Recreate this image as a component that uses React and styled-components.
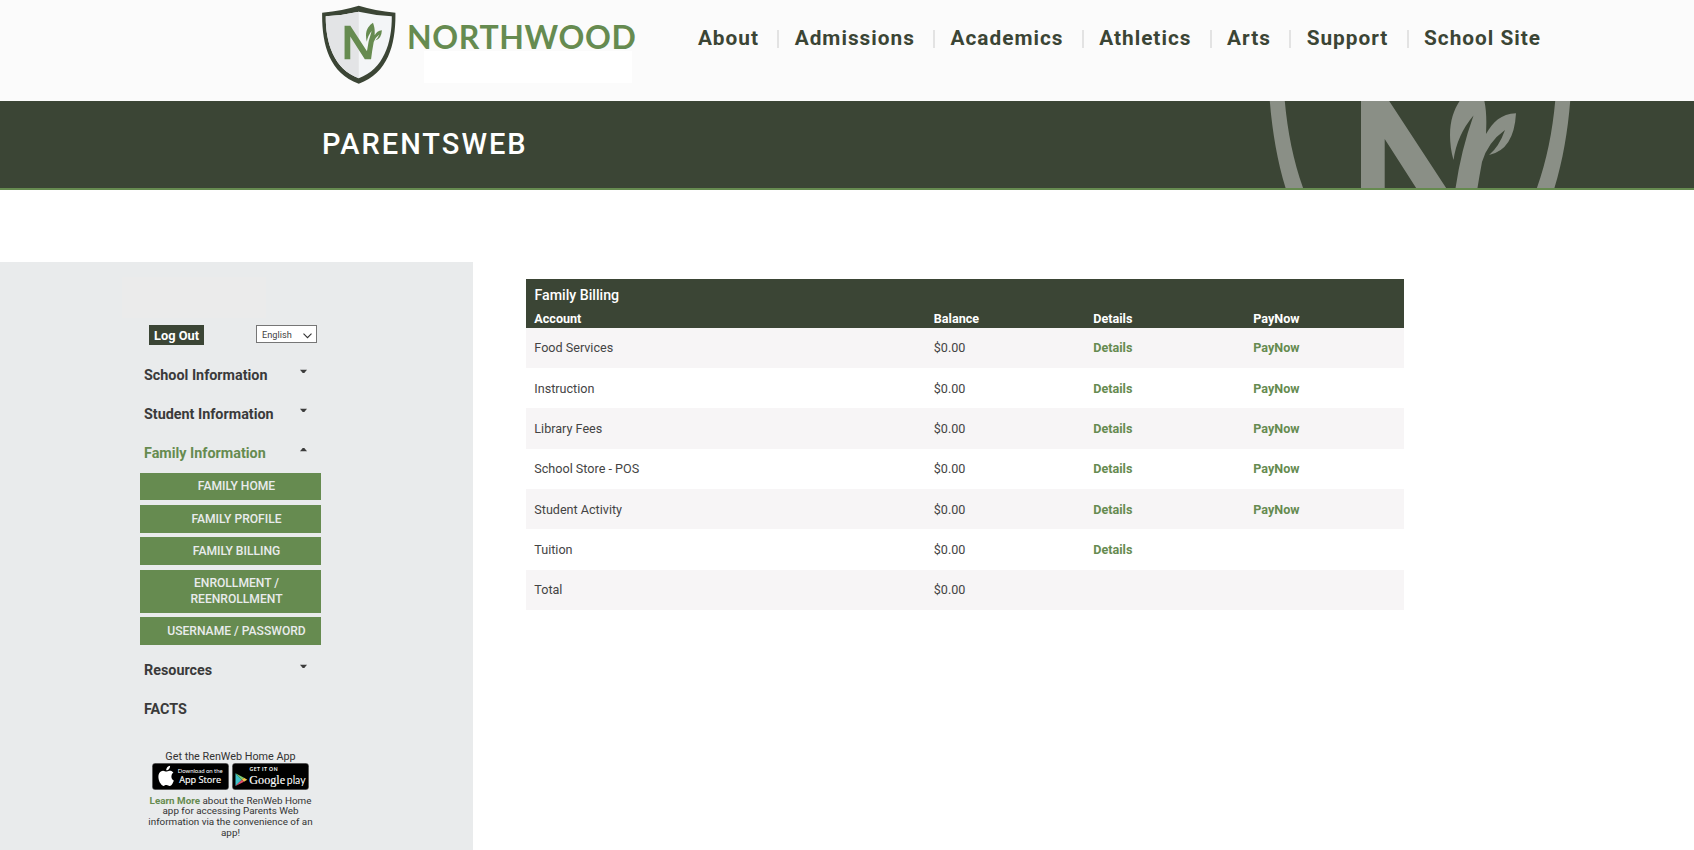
import React from 'react';
import styled, { createGlobalStyle } from 'styled-components';

const DARK = '#3b4535';
const GREEN = '#668b50';

const GlobalStyle = createGlobalStyle`
  * { box-sizing: border-box; }
  body { margin: 0; background: #fff; color: #444; font-family: Roboto, Arial, sans-serif; overflow: hidden; }
  a { color: inherit; text-decoration: none; }
`;

const Page = styled.div`
  width: 1694px;
  height: 850px;
  overflow: hidden;
`;

/* Header */
const Header = styled.header`
  display: flex;
  align-items: flex-start;
  height: 101px;
  padding-left: 322px;
  background: #fbfbfb;
`;
const Brand = styled.a`
  display: flex;
  width: 375.9px;
  padding-top: 5px;
`;
const BrandMark = styled.svg`
  display: block;
  flex: none;
  width: 75px;
  height: 80px;
`;
const BrandText = styled.div`
  margin-left: 8px;
  padding-top: 9px;
`;
const Wordmark = styled.div`
  height: 37px;
  padding-left: 2px;
  font: 700 32px/46px Lato, sans-serif;
  letter-spacing: 0.65px;
  color: ${GREEN};
  white-space: nowrap;
`;
const TaglineSpace = styled.div`
  width: 208px;
  height: 32px;
  margin-left: 19px;
  background: #fff;
`;
const Nav = styled.nav`
  display: flex;
  align-items: center;
  padding-top: 24px;
  height: 52px;
`;
const NavLink = styled.a`
  font-size: 20.8px;
  line-height: 27px;
  font-weight: 700;
  letter-spacing: 1px;
  color: ${DARK};
  white-space: nowrap;
  & + & {
    display: flex;
    align-items: center;
  }
  & + &::before {
    content: '';
    width: 2px;
    height: 18px;
    margin: 2px 15.5px 0 18.2px;
    background: #e3e3e3;
  }
`;

/* Title banner */
const Banner = styled.section`
  display: flex;
  justify-content: space-between;
  height: 89px;
  padding: 0 114px 0 322px;
  background: ${DARK};
  border-bottom: 2px solid ${GREEN};
`;
const Title = styled.h1`
  margin: 0;
  font-size: 29px;
  line-height: 87px;
  font-weight: 500;
  letter-spacing: 2px;
  color: #fff;
`;
const Watermark = styled.svg`
  display: block;
  width: 320px;
  height: 87px;
`;

/* Body */
const Body = styled.main`
  display: flex;
  align-items: flex-start;
  padding-top: 72px;
`;
const Sidebar = styled.aside`
  width: 473px;
  height: 588px;
  padding: 15px 152px 0 122px;
  background: #e9ebec;
`;
const SchoolName = styled.div`
  width: 144px;
  height: 41px;
  background: #ebebeb;
`;
const Tools = styled.div`
  display: flex;
  justify-content: space-between;
  align-items: flex-start;
  height: 29.7px;
  margin: 7px 4px 0 27px;
`;
const LogOut = styled.a`
  width: 55px;
  height: 20px;
  background: ${DARK};
  color: #fff;
  font-size: 12.8px;
  line-height: 21px;
  font-weight: 700;
  text-align: center;
`;
const Language = styled.div`
  display: flex;
  align-items: center;
  justify-content: space-between;
  width: 61px;
  height: 18px;
  padding: 0 4px 0 5px;
  border: 1px solid #767676;
  background: #fff;
  font-size: 9.2px;
  color: #444;
`;
const Chevron = styled.svg`
  width: 9px;
  height: 6px;
  margin-top: 3px;
`;
const Menu = styled.nav`
  width: 181px;
  margin-left: 18px;
`;
const MenuItem = styled.a`
  display: flex;
  justify-content: space-between;
  height: 39.4px;
  padding: 0 14px 0 4px;
  font-size: 14.35px;
  line-height: 41px;
  font-weight: 700;
  color: ${(p) => (p.$active ? GREEN : '#3a3a3a')};
`;
const Caret = styled.svg`
  width: 7px;
  height: 5px;
  margin-top: 14px;
  transform: ${(p) => (p.$up ? 'scaleY(-1)' : 'none')};
`;
const SubMenu = styled.div`
  display: flex;
  flex-direction: column;
  gap: 4.82px;
  margin-bottom: 5px;
`;
const SubLink = styled.a`
  padding: 6.6px 12px 5.6px 24px;
  background: ${GREEN};
  color: #e9ebec;
  font-size: 12.1px;
  line-height: 15.3px;
  font-weight: 500;
  text-align: center;
`;
const AppPromo = styled.div`
  width: 181px;
  margin: 21.1px 0 0 18px;
  text-align: center;
  color: #333;
`;
const PromoTitle = styled.div`
  height: 13px;
  font-size: 10.8px;
  line-height: 14.6px;
`;
const Badges = styled.div`
  display: flex;
  justify-content: center;
  gap: 3px;
`;
const Badge = styled.svg`
  display: block;
  width: 77px;
  height: 27px;
`;
const PromoText = styled.p`
  margin: 6px 4px 0;
  font-size: 9.85px;
  line-height: 10.7px;
`;
const Learn = styled.a`
  font-weight: 700;
  color: ${GREEN};
`;

/* Billing table */
const Billing = styled.section`
  width: 878px;
  margin: 17px 0 0 53px;
  font-size: 12.6px;
`;
const BillingHead = styled.div`
  height: 48.8px;
  background: ${DARK};
  color: #fff;
`;
const BillingTitle = styled.div`
  height: 31px;
  padding: 1px 0 0 8.5px;
  font-size: 14.2px;
  line-height: 31px;
  font-weight: 500;
`;
const Row = styled.div`
  display: grid;
  grid-template-columns: 399.5px 159.5px 160px 1fr;
  align-items: center;
  height: 40.33px;
  padding-left: 8.3px;
  background: ${(p) => (p.$striped ? '#f7f5f6' : '#fff')};
`;
const HeadRow = styled(Row)`
  height: 17px;
  background: none;
  font-weight: 700;
`;
const RowLink = styled.a`
  font-weight: 700;
  color: ${GREEN};
`;

/* School emblem: shield outline and the monogram with its sprouting leaves */
const SHIELD = 'M1268 40Q1355 31 1420 11Q1485 31 1572 40C1574 165 1545 290 1420 335C1295 290 1266 165 1268 40Z';
const SHIELD_INNER = 'M1283 55Q1355 51 1420 36Q1485 51 1557 55C1558 165 1523 275 1420 312C1317 275 1282 165 1283 55Z';
const SHIELD_LEFT = 'M1283 55Q1355 51 1420 36V312C1317 275 1282 165 1283 55Z';
const MONOGRAM =
  'M1361 94.6H1385L1454 200Q1459 156 1473.5 115.5Q1457 135 1453.5 160Q1450 148 1450 135C1450 108 1464 92 1479 82C1486 103 1487 112 1486 134C1493 122 1501 114 1516 113.3Q1514 150 1489 155Q1499 147 1505 130Q1488 142 1482 162Q1475 200 1471 233H1445L1384.7 139V233H1361Z';

const links = ['About', 'Admissions', 'Academics', 'Athletics', 'Arts', 'Support', 'School Site'];
const familyLinks = ['Family Home', 'Family Profile', 'Family Billing', 'Enrollment / Reenrollment', 'Username / Password'];
const accounts = [
  { name: 'Food Services', details: true, pay: true },
  { name: 'Instruction', details: true, pay: true },
  { name: 'Library Fees', details: true, pay: true },
  { name: 'School Store - POS', details: true, pay: true },
  { name: 'Student Activity', details: true, pay: true },
  { name: 'Tuition', details: true },
  { name: 'Total' },
];

function MenuEntry({ label, caret, open }) {
  return (
    <MenuItem href="#" $active={open}>
      {label}
      {caret && (
        <Caret viewBox="0 0 7 5" $up={open}>
          <path d="M0 .8H7L4.3 4H2.7Z" fill="#3c3c3c" />
        </Caret>
      )}
    </MenuItem>
  );
}

export default function App() {
  return (
    <Page>
      <GlobalStyle />
      <Header>
        <Brand href="#">
          <BrandMark viewBox="1267.5 8 311 332">
            <path d={SHIELD} fill={DARK} />
            <path d={SHIELD_INNER} fill="#f3f5f7" />
            <path d={SHIELD_LEFT} fill="#e3e4e6" />
            <path d={MONOGRAM} fill={GREEN} />
          </BrandMark>
          <BrandText>
            <Wordmark>NORTHWOOD</Wordmark>
            <TaglineSpace />
          </BrandText>
        </Brand>
        <Nav>
          {links.map((l) => (
            <NavLink key={l} href="#">{l}</NavLink>
          ))}
        </Nav>
      </Header>
      <Banner>
        <Title>PARENTSWEB</Title>
        <Watermark viewBox="1260 101 320 87" fill="#8a8f86">
          <path fillRule="evenodd" d={SHIELD + SHIELD_INNER} />
          <path d={MONOGRAM} />
        </Watermark>
      </Banner>
      <Body>
        <Sidebar>
          <SchoolName />
          <Tools>
            <LogOut href="#">Log Out</LogOut>
            <Language>
              English
              <Chevron viewBox="0 0 9 6">
                <path d="M.5 .7L4.5 4.7L8.5 .7" fill="none" stroke="#333" strokeWidth="1.1" />
              </Chevron>
            </Language>
          </Tools>
          <Menu>
            <MenuEntry label="School Information" caret />
            <MenuEntry label="Student Information" caret />
            <MenuEntry label="Family Information" caret open />
            <SubMenu>
              {familyLinks.map((l) => (
                <SubLink key={l} href="#">{l.toUpperCase()}</SubLink>
              ))}
            </SubMenu>
            <MenuEntry label="Resources" caret />
            <MenuEntry label="FACTS" />
          </Menu>
          <AppPromo>
            <PromoTitle>Get the RenWeb Home App</PromoTitle>
            <Badges>
              <Badge viewBox="0 0 77 27">
                <rect x=".3" y=".3" width="76.4" height="26.4" rx="3" fill="#000" stroke="#8c8c8c" strokeWidth=".4" />
                <path
                  fill="#fff"
                  transform="translate(3.3 2.1) scale(.97 1.03)"
                  d="M16.6 11.1c0-2.5 2-3.7 2.1-3.8-1.2-1.7-3-1.9-3.6-1.9-1.5-.2-3 .9-3.8.9s-2-.9-3.2-.9C6.4 5.4 4.9 6.3 4 7.8c-1.7 3-.4 7.5 1.3 9.9.8 1.2 1.8 2.5 3.1 2.5 1.2-.1 1.7-.8 3.2-.8s1.9.8 3.2.8 2.2-1.2 3-2.4c.9-1.4 1.3-2.7 1.3-2.8 0 0-2.5-1-2.5-3.9zM14.2 3.8c.7-.8 1.1-2 1-3.2-1 .1-2.2.7-2.9 1.5-.6.7-1.2 1.9-1 3 1.1.1 2.2-.5 2.9-1.3z"
                />
                <text x="25.7" y="10.4" fill="#fff" fontFamily="Lato, sans-serif" fontSize="6" textLength="45">Download on the</text>
                <text x="27.2" y="19.9" fill="#fff" stroke="#fff" strokeWidth=".15" fontFamily="Open Sans, sans-serif" fontSize="9.5" textLength="42" lengthAdjust="spacingAndGlyphs">App Store</text>
              </Badge>
              <Badge viewBox="0 0 77 27">
                <rect x=".3" y=".3" width="76.4" height="26.4" rx="3" fill="#000" stroke="#8c8c8c" strokeWidth=".4" />
                <path d="M3.5 10.3V23L9.8 16.7Z" fill="#3fc1c9" />
                <path d="M3.5 10.3L12 14.7L9.8 16.7Z" fill="#7fc96b" />
                <path d="M12 14.7L15.3 16.7L12 18.7L9.8 16.7Z" fill="#f3c74a" />
                <path d="M3.5 23L12 18.7L9.8 16.7Z" fill="#e1506c" />
                <text x="17.5" y="7.8" fill="#fff" fontFamily="Lato, sans-serif" fontWeight="700" fontSize="5" textLength="28">GET IT ON</text>
                <text x="17.3" y="20.6" fill="#fff" stroke="#fff" strokeWidth=".15" fontFamily="Liberation Serif, serif" fontSize="13" textLength="35.8" lengthAdjust="spacingAndGlyphs">Google</text>
                <text x="54.8" y="20.6" fill="#fff" fontFamily="Lato, sans-serif" fontSize="12" textLength="18.8" lengthAdjust="spacingAndGlyphs">play</text>
              </Badge>
            </Badges>
            <PromoText>
              <Learn href="#">Learn More</Learn> about the RenWeb Home app for accessing Parents Web information via the convenience of an app!
            </PromoText>
          </AppPromo>
        </Sidebar>
        <Billing>
          <BillingHead>
            <BillingTitle>Family Billing</BillingTitle>
            <HeadRow>
              <span>Account</span>
              <span>Balance</span>
              <span>Details</span>
              <span>PayNow</span>
            </HeadRow>
          </BillingHead>
          {accounts.map((a, i) => (
            <Row key={a.name} $striped={i % 2 === 0}>
              <span>{a.name}</span>
              <span>$0.00</span>
              {a.details && <RowLink href="#">Details</RowLink>}
              {a.pay && <RowLink href="#">PayNow</RowLink>}
            </Row>
          ))}
        </Billing>
      </Body>
    </Page>
  );
}
